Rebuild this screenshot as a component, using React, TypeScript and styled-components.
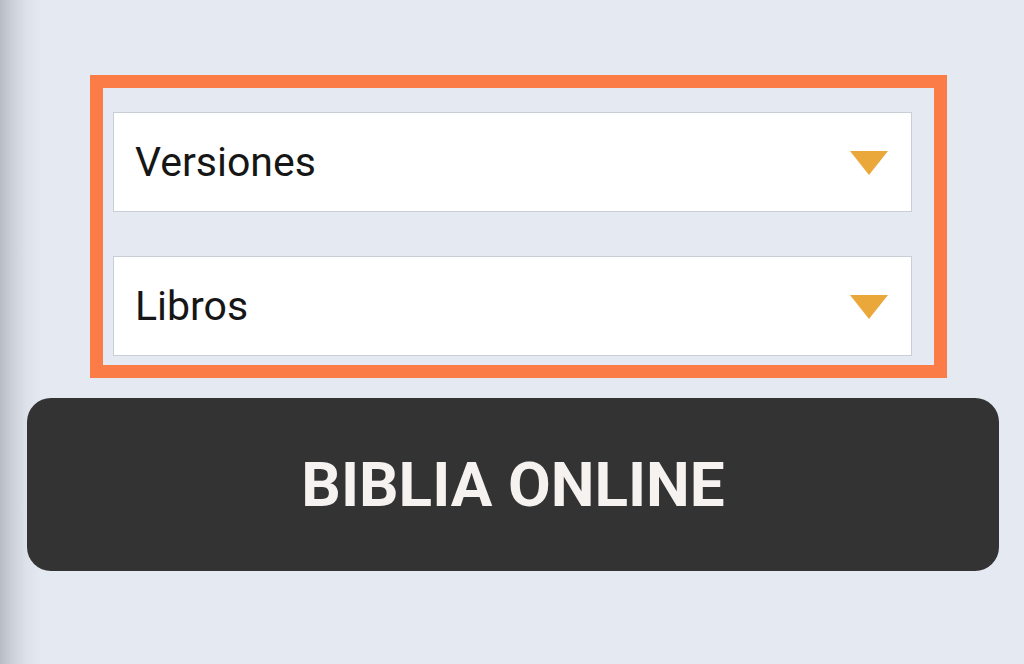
import styled, { createGlobalStyle } from 'styled-components';

const GlobalStyle = createGlobalStyle`
  html,
  body {
    margin: 0;
    padding: 0;
    height: 100%;
  }

  body {
    font-family: Roboto, 'Liberation Sans', Arial, sans-serif;
    background: linear-gradient(
      to right,
      #b6bbc4 0px,
      #ccd1d9 12px,
      #dde2ea 26px,
      #e5e9f2 42px
    );
    background-color: #e5e9f2;
  }
`;

const selects = ['Versiones', 'Libros'];

function App() {
  return (
    <>
      <GlobalStyle />
      <Page>
        <Frame>
          {selects.map((label) => (
            <Select key={label} label={label} />
          ))}
        </Frame>
        <BigButton type="button">BIBLIA ONLINE</BigButton>
      </Page>
    </>
  );
}

const Page = styled.main`
  display: flex;
  flex-direction: column;
  align-items: flex-start;
  min-height: 664px;
  padding-top: 75px;
  box-sizing: border-box;
`;

const Frame = styled.section`
  display: flex;
  flex-direction: column;
  gap: 44px;
  box-sizing: border-box;
  width: 857px;
  margin-left: 90px;
  padding: 24px 22px 9px 10px;
  border: 13px solid #fb7c46;
`;

interface SelectProps {
  label: string;
}

function Select({ label }: SelectProps) {
  return (
    <Field role="combobox" aria-label={label}>
      <FieldLabel>{label}</FieldLabel>
      <Caret width="38" height="24" viewBox="0 0 38 24" aria-hidden="true">
        <polygon points="0,0 38,0 19,24" fill="#eba83a" />
      </Caret>
    </Field>
  );
}

const Field = styled.div`
  display: flex;
  align-items: center;
  justify-content: space-between;
  box-sizing: border-box;
  height: 100px;
  padding: 0 23px 0 21px;
  background: #ffffff;
  border: 1px solid #c9ced6;
`;

const FieldLabel = styled.span`
  font-size: 41px;
  color: #161616;
  line-height: 1;
`;

const Caret = styled.svg`
  display: block;
  flex-shrink: 0;
  margin-top: 1px;
`;

const BigButton = styled.button`
  display: flex;
  align-items: center;
  justify-content: center;
  width: 972px;
  height: 173px;
  margin: 20px 0 0 27px;
  padding: 0;
  border: none;
  border-radius: 24px;
  background: #333333;
  color: #f6f2f0;
  font-family: Roboto, 'Liberation Sans', Arial, sans-serif;
  font-size: 62px;
  font-weight: 700;
  letter-spacing: 0;
  cursor: pointer;
`;

export default App;
